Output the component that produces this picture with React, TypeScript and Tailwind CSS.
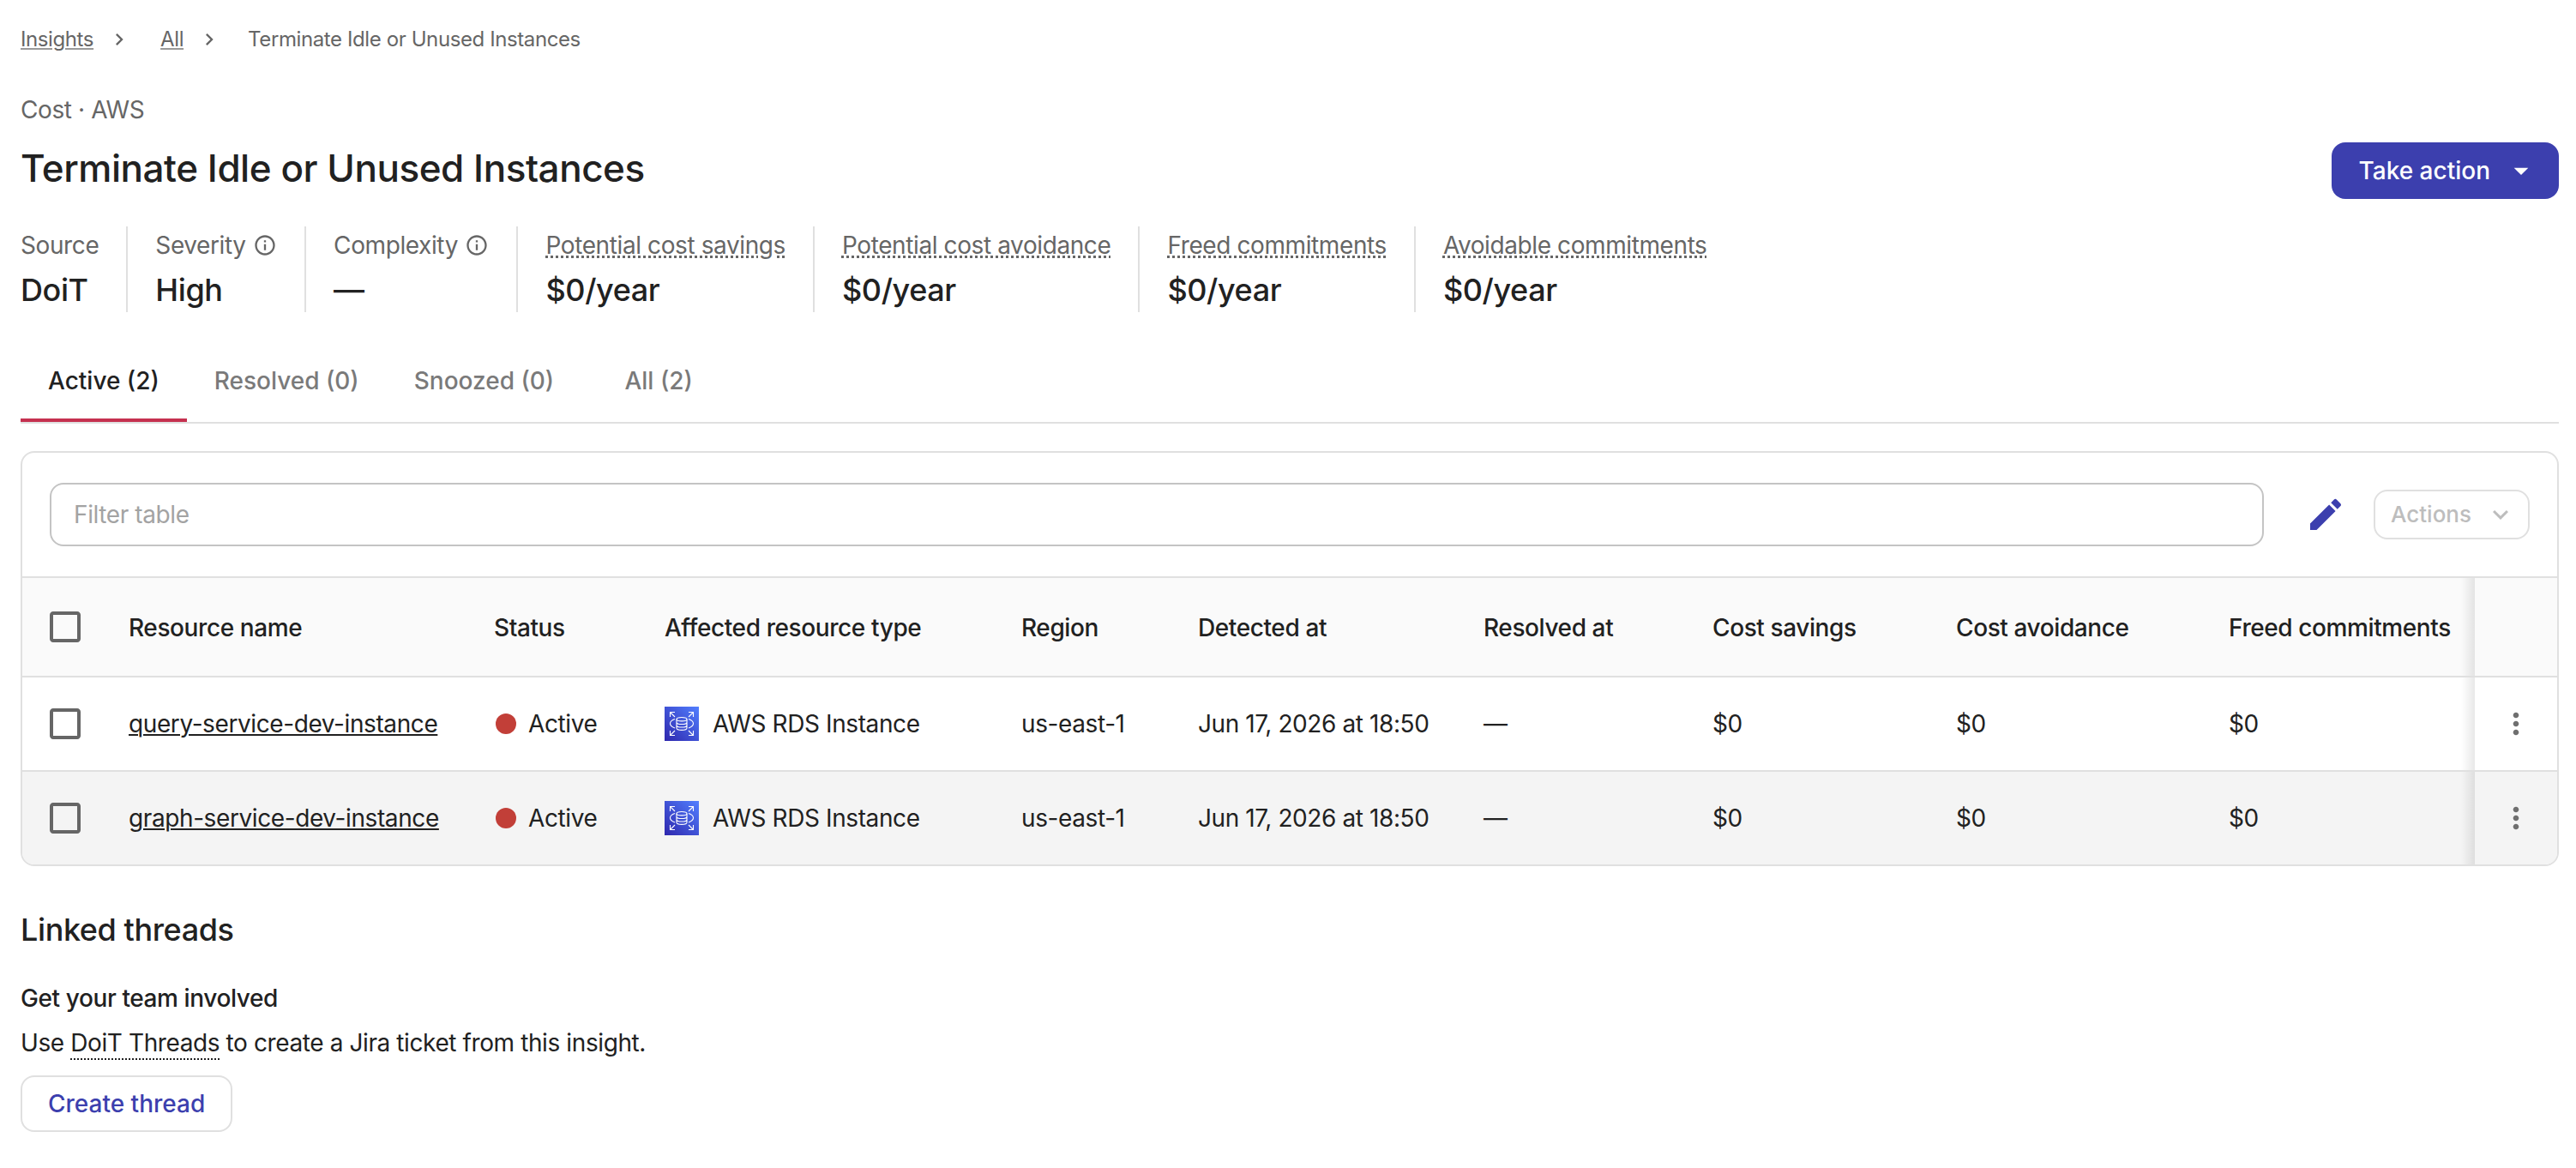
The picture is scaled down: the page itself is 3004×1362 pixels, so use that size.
import type { ReactNode } from "react";

interface Stat {
  label: string;
  value: string;
  info?: boolean;
  dotted?: boolean;
}

interface Resource {
  name: string;
  status: string;
  type: string;
  region: string;
  detectedAt: string;
  resolvedAt: string;
  costSavings: string;
  costAvoidance: string;
  freedCommitments: string;
}

const STATS: Stat[] = [
  { label: "Source", value: "DoiT" },
  { label: "Severity", value: "High", info: true },
  { label: "Complexity", value: "—", info: true },
  { label: "Potential cost savings", value: "$0/year", dotted: true },
  { label: "Potential cost avoidance", value: "$0/year", dotted: true },
  { label: "Freed commitments", value: "$0/year", dotted: true },
  { label: "Avoidable commitments", value: "$0/year", dotted: true },
];

const TABS = ["Active (2)", "Resolved (0)", "Snoozed (0)", "All (2)"];

const COLUMNS = [
  "Resource name",
  "Status",
  "Affected resource type",
  "Region",
  "Detected at",
  "Resolved at",
  "Cost savings",
  "Cost avoidance",
  "Freed commitments",
];

const RESOURCES: Resource[] = ["query-service-dev-instance", "graph-service-dev-instance"].map(
  (name) => ({
    name,
    status: "Active",
    type: "AWS RDS Instance",
    region: "us-east-1",
    detectedAt: "Jun 17, 2026 at 18:50",
    resolvedAt: "—",
    costSavings: "$0",
    costAvoidance: "$0",
    freedCommitments: "$0",
  }),
);

const GRID =
  "grid grid-cols-[124px_426px_199px_416px_206px_333px_267px_284px_318px_1fr_96px] items-center";

function Icon({ d, className }: { d: string; className: string }) {
  return (
    <svg viewBox="0 0 24 24" fill="currentColor" className={className}>
      <path d={d} />
    </svg>
  );
}

const ICONS = {
  next: "M10 6 8.59 7.41 13.17 12l-4.58 4.59L10 18l6-6z",
  info: "M11 7h2v2h-2zm0 4h2v6h-2zm1-9C6.48 2 2 6.48 2 12s4.48 10 10 10 10-4.48 10-10S17.52 2 12 2m0 18c-4.41 0-8-3.59-8-8s3.59-8 8-8 8 3.59 8 8-3.59 8-8 8",
  dropDown: "m7 10 5 5 5-5z",
  expand: "M7.41 8.59 12 13.17l4.59-4.58L18 10l-6 6-6-6z",
  edit: "M3 17.25V21h3.75L17.81 9.94l-3.75-3.75zM20.71 7.04c.39-.39.39-1.02 0-1.41l-2.34-2.34a.9959.9959 0 0 0-1.41 0l-1.83 1.83 3.75 3.75z",
  more: "M12 8c1.1 0 2-.9 2-2s-.9-2-2-2-2 .9-2 2 .9 2 2 2m0 2c-1.1 0-2 .9-2 2s.9 2 2 2 2-.9 2-2-.9-2-2-2m0 6c-1.1 0-2 .9-2 2s.9 2 2 2 2-.9 2-2-.9-2-2-2",
  checkbox:
    "M19 5v14H5V5zm0-2H5c-1.1 0-2 .9-2 2v14c0 1.1.9 2 2 2h14c1.1 0 2-.9 2-2V5c0-1.1-.9-2-2-2",
};

function RdsIcon() {
  return (
    <svg viewBox="0 0 40 40" className="size-10 flex-shrink-0" fill="none" stroke="#fff" strokeWidth="1.1">
      <defs>
        <linearGradient id="rds" x1="0" y1="1" x2="1" y2="0">
          <stop offset="0" stopColor="#2E27AD" />
          <stop offset="1" stopColor="#527FFF" />
        </linearGradient>
      </defs>
      <rect width="40" height="40" fill="url(#rds)" stroke="none" />
      {/* Corner arrows */}
      <path d="M12 6.5H6.500V12M6.500 6.500l5.500 5.500M28 6.500h5.500V12M33.500 6.500L28 12M12 33.500H6.500V28M6.500 33.500l5.500-5.500M28 33.500h5.500V28M33.500 33.500L28 28" />
      {/* Database cylinder and orbit */}
      <ellipse cx="20" cy="14.700" rx="6" ry="2.200" />
      <path d="M14 14.700v10.400c0 1.300 2.700 2.300 6 2.300s6-1 6-2.300V14.700M14 18.200c0 1.300 2.700 2.300 6 2.300s6-1 6-2.300M14 21.700c0 1.300 2.700 2.300 6 2.300s6-1 6-2.300" />
      <path d="M12 14.600c-3.300 1.100-5.500 3-5.500 5.100s2.200 4 5.500 5.200M28 14.600c3.300 1.100 5.500 3 5.500 5.100s-2.200 4-5.500 5.200" />
    </svg>
  );
}

function Breadcrumbs() {
  return (
    <nav className="flex h-10 items-center text-[24px] leading-10 text-[#666666]">
      <a className="underline decoration-[#999999] decoration-2 underline-offset-2">Insights</a>
      <Icon d={ICONS.next} className="mr-[34px] ml-4 size-7" />
      <a className="underline decoration-[#999999] decoration-2 underline-offset-2">All</a>
      <Icon d={ICONS.next} className="mr-[31px] ml-4 size-7" />
      <span>Terminate Idle or Unused Instances</span>
    </nav>
  );
}

function StatItem({ stat }: { stat: Stat }) {
  return (
    <div className="h-[100px] border-r-2 border-[#e0e0e0] px-8 first:pl-0 last:border-r-0">
      <div className="flex items-center gap-[8.5px] leading-[44px] text-[#666666]">
        <span
          className={
            stat.dotted ? "underline decoration-dotted decoration-[3px] underline-offset-2" : ""
          }
        >
          {stat.label}
        </span>
        {stat.info && <Icon d={ICONS.info} className="size-7" />}
      </div>
      <div className="mt-1 text-[36px] leading-[52px] font-medium">{stat.value}</div>
    </div>
  );
}

function Tabs() {
  return (
    <div className="mt-8 flex border-b-2 border-[#e0e0e0] font-medium tracking-normal">
      {TABS.map((tab, i) => (
        <button
          key={tab}
          className={
            i === 0
              ? "h-24 border-b-4 border-[#c5304f] px-8 pt-1"
              : "h-24 min-w-[180px] px-8 text-[#7a7a7a]"
          }
        >
          {tab}
        </button>
      ))}
    </div>
  );
}

function StickyCell({ children }: { children?: ReactNode }) {
  return (
    <div className="relative flex h-full items-center justify-center text-[#6f6f6f]">
      <div className="absolute inset-y-0 right-full w-4 bg-linear-to-l from-black/9 to-transparent" />
      {children}
    </div>
  );
}

function ResourceRow({ resource }: { resource: Resource }) {
  return (
    <div
      className={`${GRID} h-[110px] border-b-2 border-[#e0e0e0] last:h-[108px] last:border-b-0 even:bg-[#f4f4f4]`}
    >
      <Icon d={ICONS.checkbox} className="ml-[26px] size-12 text-[#666666]" />
      <span>
        <a className="underline decoration-2 underline-offset-2">{resource.name}</a>
      </span>
      <div className="flex items-center pl-0.5">
        <span className="mr-3.5 size-6 rounded-full bg-[#c23f38]" />
        <span>{resource.status}</span>
      </div>
      <div className="flex items-center gap-4">
        <RdsIcon />
        <span>{resource.type}</span>
      </div>
      <span>{resource.region}</span>
      <span>{resource.detectedAt}</span>
      <span>{resource.resolvedAt}</span>
      <span>{resource.costSavings}</span>
      <span>{resource.costAvoidance}</span>
      <span>{resource.freedCommitments}</span>
      <StickyCell>
        <Icon d={ICONS.more} className="size-10" />
      </StickyCell>
    </div>
  );
}

function ResourceTable() {
  return (
    <section className="mt-8 overflow-hidden rounded-2xl border-2 border-[#e0e0e0]">
      {/* Toolbar */}
      <div className="flex h-36 items-center px-8">
        <input
          placeholder="Filter table"
          className="h-[74px] flex-1 rounded-2xl border-2 border-[#c4c4c4] px-[26px] tracking-[-0.4px] placeholder:text-[#a3a3a3]"
        />
        <button className="mx-4 ml-8 p-4 text-[#3c3fae]">
          <Icon d={ICONS.edit} className="size-12" />
        </button>
        <button className="flex h-[58px] w-[182px] items-center justify-between rounded-2xl border-2 border-[#e0e0e0] pr-3.5 pl-[18px] text-[26px] font-medium tracking-normal text-[#bdbdbd]">
          <span>Actions</span>
          <Icon d={ICONS.expand} className="size-9" />
        </button>
      </div>

      <div className={`${GRID} h-[118px] border-y-2 border-[#e0e0e0] bg-[#fafafa] font-medium`}>
        <Icon d={ICONS.checkbox} className="ml-[26px] size-12 text-[#666666]" />
        {COLUMNS.map((column) => (
          <span key={column} className="pt-0.5 whitespace-nowrap">
            {column}
          </span>
        ))}
        <StickyCell />
      </div>
      {RESOURCES.map((resource) => (
        <ResourceRow key={resource.name} resource={resource} />
      ))}
    </section>
  );
}

function LinkedThreads() {
  return (
    <section>
      <h2 className="mt-[50px] text-[36px] leading-[48px] font-medium">Linked threads</h2>
      <h3 className="mt-9 leading-10 font-medium">Get your team involved</h3>
      <p className="mt-3 leading-10">
        Use{" "}
        <a className="underline decoration-dotted decoration-2 underline-offset-8">DoiT Threads</a>{" "}
        to create a Jira ticket from this insight.
      </p>
      <button className="mt-[18px] h-[66px] rounded-2xl border-2 border-[#e0e0e0] px-[30px] font-medium tracking-normal text-[#3c3fae]">
        Create thread
      </button>
    </section>
  );
}

export default function App() {
  return (
    <main className="min-h-[1362px] w-[3004px] bg-white pt-[26px] pr-5 pb-10 pl-6 font-['Inter',sans-serif] text-[28px] leading-10 tracking-[-0.4px] text-[#212121]">
      <Breadcrumbs />
      <p className="mt-[42px] leading-10 text-[#666666]">Cost · AWS</p>
      <header className="mt-[18px] flex items-start justify-between">
        <h1 className="text-[44px] leading-[60px] font-medium tracking-[-0.46px]">
          Terminate Idle or Unused Instances
        </h1>
        <button className="flex h-[66px] items-center gap-4 rounded-2xl bg-[#3c3fae] pr-6 pl-8 font-medium tracking-normal text-white">
          Take action
          <Icon d={ICONS.dropDown} className="size-10" />
        </button>
      </header>
      <div className="mt-8 flex">
        {STATS.map((stat) => (
          <StatItem key={stat.label} stat={stat} />
        ))}
      </div>
      <Tabs />
      <ResourceTable />
      <LinkedThreads />
    </main>
  );
}
